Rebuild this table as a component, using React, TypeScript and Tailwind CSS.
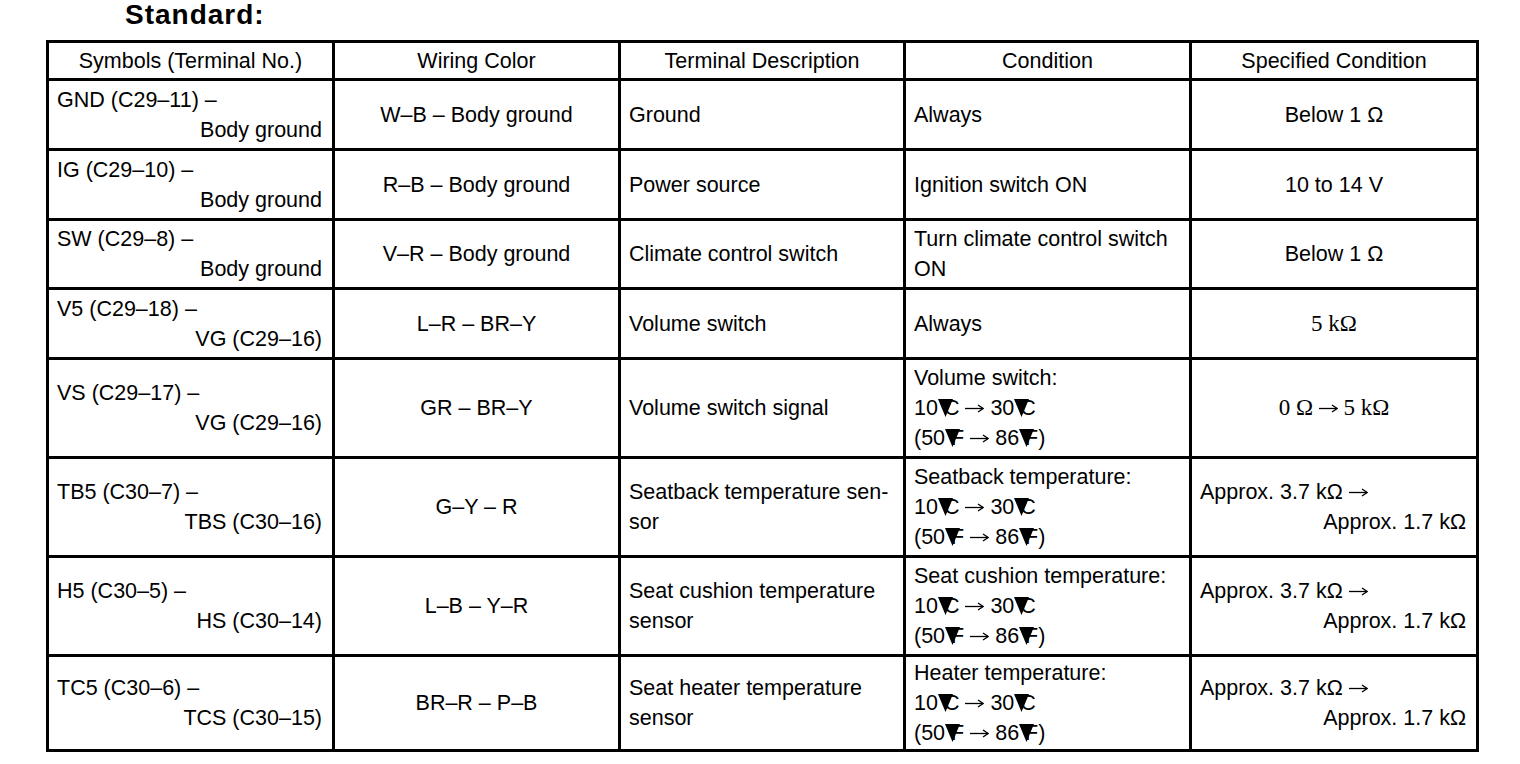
import React from "react";

function Deg({ u }: { u: string }) {
  return (
    <span className="relative ml-[6px]">
      {u}
      <svg
        className="absolute left-[-6px] top-[3px]"
        width="15"
        height="18"
        viewBox="0 0 15 18"
      >
        <polygon points="0,0 15,0 7.5,18" fill="black" />
      </svg>
    </span>
  );
}

function Arrow() {
  return (
    <svg
      className="inline-block align-[2px]"
      width="19"
      height="9"
      viewBox="0 0 19 9"
    >
      <line x1="0" y1="4.5" x2="18" y2="4.5" stroke="black" strokeWidth="1.3" />
      <polyline
        points="13,1 18.2,4.5 13,8"
        fill="none"
        stroke="black"
        strokeWidth="1.3"
      />
    </svg>
  );
}

const Temp = () => (
  <>
    <div className="whitespace-nowrap">
      10<Deg u="C" /> <Arrow /> 30<Deg u="C" />
    </div>
    <div className="whitespace-nowrap">
      (50<Deg u="F" /> <Arrow /> 86<Deg u="F" />)
    </div>
  </>
);

type Row = {
  sym: [string, string];
  wire: string;
  desc: React.ReactNode;
  cond: React.ReactNode;
  spec: React.ReactNode;
  specLeft?: boolean;
};

const approx = (
  <>
    <div className="text-left whitespace-nowrap">
      Approx. 3.7 kΩ <Arrow />
    </div>
    <div className="text-right pr-[2px] whitespace-nowrap">Approx. 1.7 kΩ</div>
  </>
);

const rows: Row[] = [
  {
    sym: ["GND (C29–11) –", "Body ground"],
    wire: "W–B – Body ground",
    desc: "Ground",
    cond: "Always",
    spec: "Below 1 Ω",
  },
  {
    sym: ["IG (C29–10) –", "Body ground"],
    wire: "R–B – Body ground",
    desc: "Power source",
    cond: "Ignition switch ON",
    spec: "10 to 14 V",
  },
  {
    sym: ["SW (C29–8) –", "Body ground"],
    wire: "V–R – Body ground",
    desc: "Climate control switch",
    cond: (
      <>
        <div className="whitespace-nowrap">Turn climate control switch</div>
        <div>ON</div>
      </>
    ),
    spec: "Below 1 Ω",
  },
  {
    sym: ["V5 (C29–18) –", "VG (C29–16)"],
    wire: "L–R – BR–Y",
    desc: "Volume switch",
    cond: "Always",
    spec: <span className="font-['Liberation_Serif',serif] text-[23px]">5 kΩ</span>,
  },
  {
    sym: ["VS (C29–17) –", "VG (C29–16)"],
    wire: "GR – BR–Y",
    desc: "Volume switch signal",
    cond: (
      <>
        <div>Volume switch:</div>
        <Temp />
      </>
    ),
    spec: (
      <span className="font-['Liberation_Serif',serif] text-[23px] whitespace-nowrap">
        0 Ω <Arrow /> 5 kΩ
      </span>
    ),
  },
  {
    sym: ["TB5 (C30–7) –", "TBS (C30–16)"],
    wire: "G–Y – R",
    desc: (
      <>
        <div className="whitespace-nowrap">Seatback temperature sen-</div>
        <div>sor</div>
      </>
    ),
    cond: (
      <>
        <div>Seatback temperature:</div>
        <Temp />
      </>
    ),
    spec: approx,
    specLeft: true,
  },
  {
    sym: ["H5 (C30–5) –", "HS (C30–14)"],
    wire: "L–B – Y–R",
    desc: (
      <>
        <div className="whitespace-nowrap">Seat cushion temperature</div>
        <div>sensor</div>
      </>
    ),
    cond: (
      <>
        <div className="whitespace-nowrap">Seat cushion temperature:</div>
        <Temp />
      </>
    ),
    spec: approx,
    specLeft: true,
  },
  {
    sym: ["TC5 (C30–6) –", "TCS (C30–15)"],
    wire: "BR–R – P–B",
    desc: (
      <>
        <div className="whitespace-nowrap">Seat heater temperature</div>
        <div>sensor</div>
      </>
    ),
    cond: (
      <>
        <div>Heater temperature:</div>
        <Temp />
      </>
    ),
    spec: approx,
    specLeft: true,
  },
];

const cell = "bg-white flex flex-col justify-center";

export default function App() {
  return (
    <div className="w-[1520px] h-[764px] bg-white text-black font-['Liberation_Sans',Arial,sans-serif] overflow-hidden">
      <div className="pl-[125px] text-[28px] leading-[30px] font-bold tracking-[1px] h-[40px]">
        Standard:
      </div>
      <div className="ml-[46px] w-[1433px] grid grid-cols-[283px_283px_282px_283px_284px] grid-rows-[35px_67px_67px_66px_67px_96px_96px_96px_92px] gap-[3px] p-[3px] bg-black text-[21.5px] leading-[30px]">
        {[
          "Symbols (Terminal No.)",
          "Wiring Color",
          "Terminal Description",
          "Condition",
          "Specified Condition",
        ].map((h) => (
          <div key={h} className={`${cell} items-center`}>
            {h}
          </div>
        ))}
        {rows.map((r, i) => (
          <React.Fragment key={i}>
            <div className={`${cell} pl-[8px] pr-[10px]`}>
              <div className="text-left whitespace-nowrap">{r.sym[0]}</div>
              <div className="text-right whitespace-nowrap">{r.sym[1]}</div>
            </div>
            <div className={`${cell} items-center`}>{r.wire}</div>
            <div className={`${cell} pl-[8px]`}>{r.desc}</div>
            <div className={`${cell} pl-[8px]`}>{r.cond}</div>
            {r.specLeft ? (
              <div className={`${cell} pl-[8px] pr-[8px]`}>{r.spec}</div>
            ) : (
              <div className={`${cell} items-center`}>{r.spec}</div>
            )}
          </React.Fragment>
        ))}
      </div>
    </div>
  );
}
